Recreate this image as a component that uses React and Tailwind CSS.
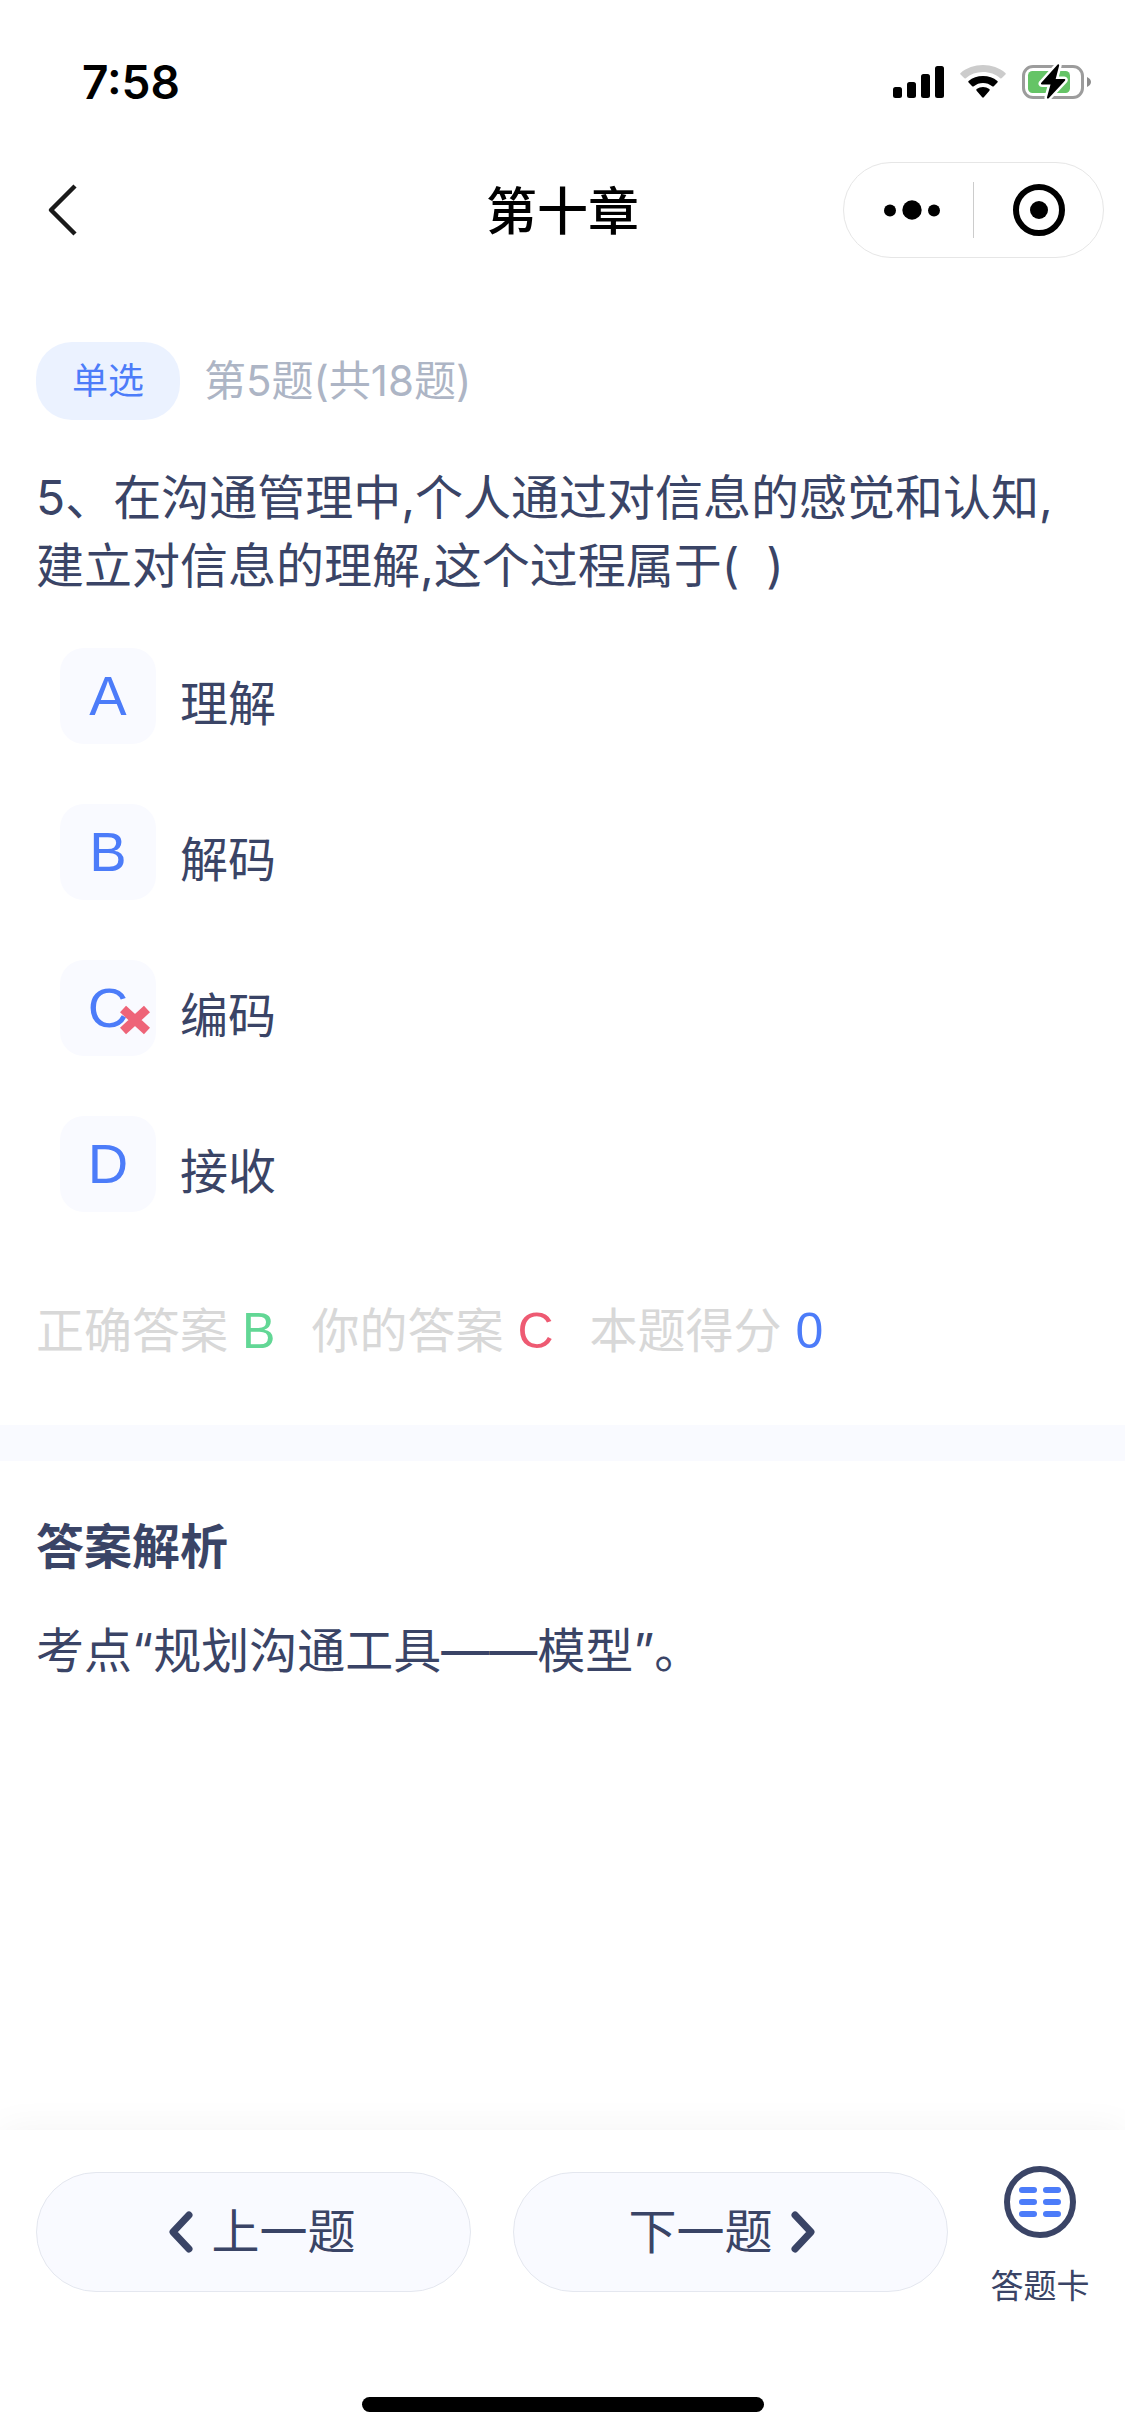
const options = [
  { letter: "A", text: "理解" },
  { letter: "B", text: "解码" },
  { letter: "C", text: "编码", wrong: true },
  { letter: "D", text: "接收" },
];

const results = [
  { label: "正确答案", value: "B", tone: "text-[#62d795]" },
  { label: "你的答案", value: "C", tone: "text-[#ee5a72]" },
  { label: "本题得分", value: "0", tone: "text-[#4c7cf9]" },
];

function SignalIcon() {
  return (
    <svg width="51" height="36" viewBox="0 0 51 36" aria-hidden="true">
      <rect x="0" y="23" width="9" height="11" rx="2.5" />
      <rect x="14" y="18" width="9" height="16" rx="2.5" />
      <rect x="28" y="10" width="9" height="24" rx="2.5" />
      <rect x="42" y="2" width="9" height="32" rx="2.5" />
    </svg>
  );
}

function WifiIcon() {
  return (
    <svg width="46" height="36" viewBox="0 0 46 36" aria-hidden="true">
      <path d="M0.6 10.6a1.2 1.2 0 0 1 0-1.7C6.600 3.800 14.500 1 23 1s16.400 2.800 22.400 7.900a1.200 1.200 0 0 1 0 1.700l-3.500 3.500a1.200 1.200 0 0 1-1.700.1C35.600 10.200 29.600 8 23 8S10.400 10.200 5.800 14.200a1.200 1.200 0 0 1-1.700-.1z" fill="#cccccc" />
      <path d="M8.600 18.600a1.200 1.200 0 0 1 0-1.700C12.500 13.800 17.500 12 23 12s10.500 1.800 14.400 4.900a1.200 1.200 0 0 1 0 1.700l-3.600 3.600a1.200 1.200 0 0 1-1.600.1C29.600 20.200 26.500 19 23 19s-6.600 1.200-9.200 3.300a1.200 1.200 0 0 1-1.600-.1z" />
      <path d="M16.600 26.700a1.200 1.200 0 0 1 .1-1.700C18.500 23.700 20.700 23 23 23s4.500.7 6.300 2a1.200 1.200 0 0 1 .1 1.700l-5.600 6.600a1.100 1.100 0 0 1-1.600 0z" />
    </svg>
  );
}

function BatteryIcon() {
  const bolt =
    "M35.500.800 19.300 18.800c-.7.900-.3 1.700.7 1.700h8.500l-3.500 12.700c-.3 1.400.9 1.900 1.700 1L42.900 16.700c.8-.9.300-1.700-.7-1.700h-8.500l3.400-13.200c.3-1.400-.8-1.900-1.600-1z";
  return (
    <svg width="70" height="36" viewBox="0 0 70 36" aria-hidden="true">
      <rect x="1.500" y="2.500" width="59" height="31" rx="9.500" fill="none" stroke="#9c9c9c" strokeWidth="3" />
      <rect x="6" y="7" width="42" height="22" rx="4.500" fill="#65c466" />
      <path d="M65 13v10c2.400-1 4-2.900 4-5s-1.600-4-4-5z" fill="#8c8c8c" />
      <path d={bolt} stroke="#ffffff" strokeWidth="5" strokeLinejoin="round" />
      <path d={bolt} />
    </svg>
  );
}

function Chevron({ right }) {
  return (
    <svg width="48" height="48" viewBox="0 0 48 48" aria-hidden="true" fill="none" stroke="currentColor" strokeWidth="7" strokeLinecap="round" strokeLinejoin="round">
      <path d={right ? "M10 7 26 24 10 41" : "M38 7 22 24 38 41"} />
    </svg>
  );
}

export default function App() {
  return (
    <div className="flex min-h-screen flex-col bg-white font-['Inter','Noto_Sans_CJK_SC',sans-serif] text-5xl text-[#3a4466]" lang="zh-CN">
      <div className="flex h-[132px] items-center justify-between pt-8 pr-[33px] pl-[82px] text-black">
        <span className="text-[46px] leading-none font-semibold">7:58</span>
        <div className="flex items-center gap-4">
          <SignalIcon />
          <WifiIcon />
          <BatteryIcon />
        </div>
      </div>

      <header className="grid h-[156px] grid-cols-[1fr_auto_1fr] items-center px-[21px]">
        <button type="button" aria-label="返回" className="flex pl-[15px] text-[#1a1a1a]">
          <svg width="56" height="56" viewBox="0 0 56 56" fill="none" stroke="currentColor" strokeWidth="4.500" strokeLinejoin="round" aria-hidden="true">
            <path d="M39 4 15 28 39 52" />
          </svg>
        </button>
        <h1 className="pt-1 text-[51px] leading-[68px] font-medium text-black">第十章</h1>
        <div className="flex h-24 w-[261px] items-center justify-self-end rounded-full border border-[#e6e6e6]">
          <button type="button" aria-label="更多" className="flex w-[129px] justify-center pl-[7px]">
            <svg width="56" height="20" viewBox="0 0 56 20" aria-hidden="true">
              <circle cx="6" cy="10.500" r="6" />
              <circle cx="28" cy="10" r="9.700" />
              <circle cx="50" cy="10.500" r="6" />
            </svg>
          </button>
          <span className="h-14 w-px bg-[#cccccc]" />
          <button type="button" aria-label="关闭" className="flex flex-1 justify-center">
            <svg width="52" height="52" viewBox="0 0 52 52" aria-hidden="true">
              <circle cx="26" cy="26" r="23" fill="none" stroke="#000000" strokeWidth="6" />
              <circle cx="26" cy="26" r="9" />
            </svg>
          </button>
        </div>
      </header>

      <main className="flex-1">
        <section className="px-9 pt-[54px] pb-[60px]">
          <div className="flex items-center gap-6">
            <span className="flex h-[78px] w-36 items-center justify-center rounded-[36px] bg-[#ebf2ff] text-4xl text-[#4c7cf9]">单选</span>
            <span className="text-[42px] leading-none text-[#adb5c5]">第5题(共18题)</span>
          </div>

          <fieldset className="mt-11">
            <legend className="leading-[68px]">
              5、在沟通管理中,个人通过对信息的感觉和认知,建立对信息的理解,这个过程属于(&nbsp;&nbsp;)
            </legend>
            <div className="mt-12 flex flex-col gap-[60px] pl-6">
              {options.map((o) => (
                <label key={o.letter} className="relative flex items-center gap-6">
                  <input type="radio" name="answer" value={o.letter} defaultChecked={o.wrong} className="sr-only" />
                  <span className="relative flex size-24 items-center justify-center rounded-3xl bg-[#f9faff] font-['Liberation_Sans',sans-serif] text-[56px] leading-none text-[#4c7cf9]">
                    {o.letter}
                    {o.wrong && (
                      <svg className="absolute top-[45px] left-[60px]" width="30" height="30" viewBox="0 0 30 30" aria-hidden="true">
                        <path d="M3 4 27 26M27 4 3 26" stroke="#ee6478" strokeWidth="9" />
                      </svg>
                    )}
                  </span>
                  <span className="pt-4 leading-[68px]">{o.text}</span>
                </label>
              ))}
            </div>
          </fieldset>

          <div className="mt-[85px] flex flex-wrap gap-x-9 leading-[68px] text-[#d8d8d8]">
            {results.map((r) => (
              <p key={r.label} className="flex gap-3.5">
                {r.label}
                <span className={`font-['Liberation_Sans',sans-serif] text-[50px] ${r.tone}`}>{r.value}</span>
              </p>
            ))}
          </div>
        </section>

        <div className="h-9 bg-[#f9faff]" />

        <section className="px-9 pt-[52px] leading-[68px]">
          <h2 className="font-bold">答案解析</h2>
          <p className="mt-9">考点“规划沟通工具——模型”。</p>
        </section>
      </main>

      <footer className="flex flex-col bg-white pt-9 pb-6 shadow-[0_0_36px_rgba(0,0,0,0.05)]">
        <div className="flex items-start pl-9">
          <div className="mt-1.5 grid flex-1 grid-cols-2 gap-[42px]">
            <button type="button" className="flex h-[120px] items-center justify-center gap-3 rounded-full border border-[#e4e7ef] bg-[#f9faff]">
              <Chevron />
              上一题
            </button>
            <button type="button" className="flex h-[120px] items-center justify-center gap-3 rounded-full border border-[#e4e7ef] bg-[#f9faff]">
              下一题
              <Chevron right />
            </button>
          </div>
          <button type="button" className="ml-[7px] flex w-[170px] flex-col items-center gap-[30px] text-[33px] leading-9">
            <svg width="72" height="72" viewBox="0 0 72 72" fill="none" aria-hidden="true">
              <circle cx="36" cy="36" r="33" stroke="#3a4466" strokeWidth="6" />
              <path d="M18 24h12M42 24h12M18 36h12M42 36h12M18 48h12M42 48h12" stroke="#4c7cf9" strokeWidth="6" strokeLinecap="round" />
            </svg>
            答题卡
          </button>
        </div>
        <div className="mt-[93px] h-[15px] w-[402px] self-center rounded-full bg-black" />
      </footer>
    </div>
  );
}
